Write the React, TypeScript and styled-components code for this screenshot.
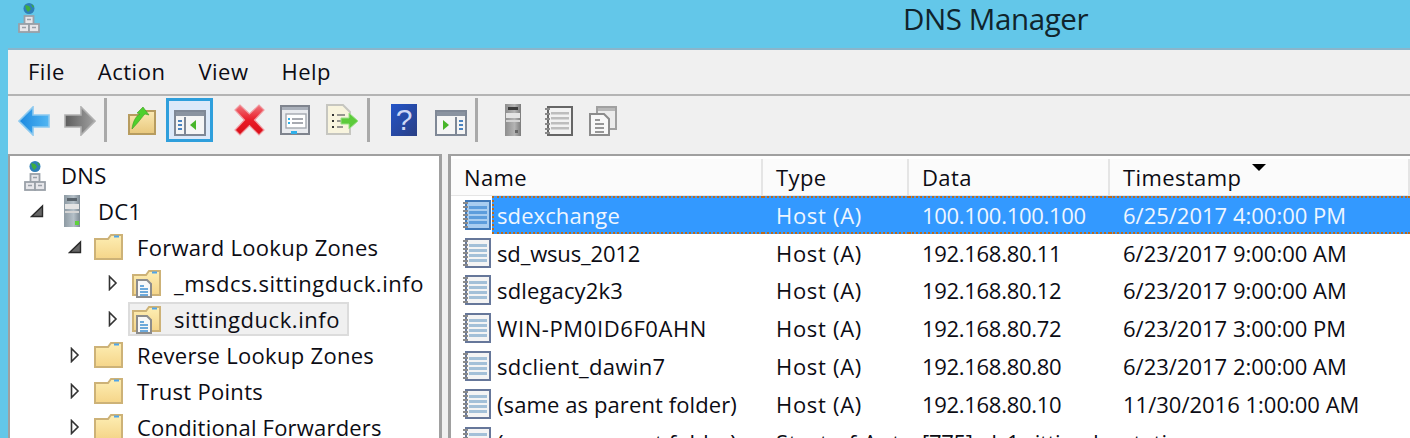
import React from 'react';
import styled, { createGlobalStyle } from 'styled-components';

const Global = createGlobalStyle`
  html, body {
    margin: 0;
    padding: 0;
    height: 438px;
    overflow: hidden;
    background: #63c7e9;
  }
`;

const Screen = styled.div`
  width: 1410px;
  height: 438px;
  overflow: hidden;
  display: flex;
  flex-direction: column;
  background: #63c7e9;
  font-family: 'Open Sans', 'Noto Sans', sans-serif;
  font-size: 22px;
  color: #0c0c14;
`;

const TitleBar = styled.header`
  height: 48px;
  flex: none;
  display: flex;
  align-items: flex-start;
  padding: 2px 0 0 18px;
  box-sizing: border-box;
`;

const Title = styled.div`
  margin-left: 863px;
  font-size: 29.5px;
  line-height: 34px;
  letter-spacing: -0.4px;
  white-space: nowrap;
  color: #10242c;
`;

const Window = styled.div`
  flex: 1;
  margin-left: 8px;
  min-height: 0;
  display: flex;
  flex-direction: column;
  background: #f0f0f0;
  border-top: 2px solid #8ab5cb;
`;

const MenuBar = styled.nav`
  height: 44px;
  flex: none;
  display: flex;
  align-items: flex-start;
  padding-left: 20px;
  gap: 33px;
  border-bottom: 2px solid #b4b4b4;
  letter-spacing: 0.5px;
`;

const MenuItem = styled.span`
  line-height: 42px;
`;

const ToolBar = styled.div`
  height: 58px;
  flex: none;
  display: flex;
  align-items: flex-start;
  padding: 2px 0 0 10px;
  box-sizing: border-box;
`;

const Tool = styled.span<{ $before?: number; $top?: number }>`
  display: block;
  flex: none;
  margin-left: ${(p) => p.$before ?? 0}px;
  margin-top: ${(p) => p.$top ?? 8}px;
  line-height: 0;
`;

const ToolSeparator = styled.span<{ $before: number }>`
  display: block;
  flex: none;
  width: 3px;
  height: 44px;
  margin-left: ${(p) => p.$before}px;
  background: #a9a9a9;
`;

const ActiveTool = styled.span`
  flex: none;
  display: flex;
  align-items: center;
  justify-content: center;
  width: 47px;
  height: 44px;
  margin-left: 10px;
  box-sizing: border-box;
  border: 3px solid #2f9fdc;
  background: #dce9f9;
  padding-top: 5px;
  line-height: 0;
`;

const Panes = styled.div`
  flex: 1;
  min-height: 0;
  display: flex;
  gap: 6px;
`;

const TreePane = styled.aside`
  width: 434px;
  flex: none;
  box-sizing: border-box;
  background: #fff;
  border: 2px solid #a0a0a0;
  border-width: 2px 3px 0 2px;
  padding-top: 1px;
`;

const TreeRow = styled.div<{ $indent: number }>`
  height: 36px;
  display: flex;
  align-items: center;
  padding-left: ${(p) => p.$indent}px;
  white-space: nowrap;
`;

const Twisty = styled.span<{ $w: number }>`
  width: ${(p) => p.$w}px;
  flex: none;
  display: flex;
  line-height: 0;
`;

const TreeIcon = styled.span<{ $w: number }>`
  width: ${(p) => p.$w}px;
  flex: none;
  display: flex;
  line-height: 0;
`;

const TreeLabel = styled.span<{ $spacing?: number }>`
  display: block;
  line-height: 32px;
  letter-spacing: ${(p) => p.$spacing ?? 0.3}px;
`;

const SelectedGroup = styled.span`
  display: flex;
  align-items: center;
  height: 34px;
  box-sizing: border-box;
  margin-left: -4px;
  padding: 0 7px 0 2px;
  background: #f0f0f0;
  border: 2px solid #dcdcdc;
`;

const ListPane = styled.main`
  flex: 1;
  min-width: 0;
  box-sizing: border-box;
  background: #fff;
  border-top: 2px solid #a0a0a0;
  border-left: 3px solid #a0a0a0;
  padding-top: 3px;
  overflow: hidden;
`;

const columns = '312px 146px 201px 1fr';

const HeaderRow = styled.div`
  display: grid;
  grid-template-columns: ${columns};
  height: 37px;
  box-sizing: border-box;
  border-bottom: 2px solid #e5e5e5;
  letter-spacing: 0.4px;
`;

const HeaderCell = styled.div`
  position: relative;
  padding-left: 13px;
  line-height: 36px;
  background: #fbfbfb;
  border-right: 2px solid #e5e5e5;
`;

const SortArrow = styled.span`
  position: absolute;
  top: 5px;
  left: 142px;
  width: 0;
  height: 0;
  border-left: 7px solid transparent;
  border-right: 7px solid transparent;
  border-top: 7px solid #000;
`;

const Row = styled.div`
  height: 37.8px;
  display: grid;
  grid-template-columns: ${columns};
  align-items: stretch;
`;

const NameCell = styled.div`
  display: flex;
  align-items: center;
  padding-left: 12px;
  white-space: nowrap;
`;

const RowIcon = styled.span`
  width: 29px;
  flex: none;
  display: flex;
  line-height: 0;
`;

const NameText = styled.span<{ $selected?: boolean; $spacing: number }>`
  flex: 1;
  align-self: stretch;
  display: flex;
  align-items: center;
  padding-left: 5px;
  letter-spacing: ${(p) => p.$spacing}px;
  ${(p) =>
    p.$selected
      ? `background: #3399ff; color: #eef6ff; border: dotted #b86a1e; border-width: 2px 0 2px 2px; padding-left: 3px;`
      : ''}
`;

const Cell = styled.div<{ $selected?: boolean; $spacing: number }>`
  display: flex;
  align-items: center;
  padding-left: 13px;
  white-space: nowrap;
  overflow: hidden;
  letter-spacing: ${(p) => p.$spacing}px;
  ${(p) =>
    p.$selected
      ? `background: #3399ff; color: #eef6ff; border: dotted #b86a1e; border-width: 2px 0;`
      : ''}
`;

function DnsIcon() {
  return (
    <svg width="22" height="31" viewBox="0 0 22 31">
      <circle cx="11" cy="6.5" r="5.5" fill="#2f7fb8" />
      <path d="M7 3l4 1 2 3-3 3-2-3zM13 2l3 2-1 2z" fill="#3fae3f" />
      <rect x="6.5" y="14" width="9" height="8" fill="#e6e6ea" stroke="#9aa0a8" strokeWidth="1.8" />
      <rect x="1" y="22" width="10" height="8" fill="#e6e6ea" stroke="#9aa0a8" strokeWidth="1.8" />
      <rect x="11" y="22" width="10" height="8" fill="#e6e6ea" stroke="#9aa0a8" strokeWidth="1.8" />
      <path d="M9 17.5h4M4 25.5h4M14 25.5h4" stroke="#9aa0a8" strokeWidth="1.4" />
    </svg>
  );
}

function ServerIcon({ gray }: { gray?: boolean }) {
  const id = gray ? 'srvg' : 'srvc';
  return (
    <svg width="16" height="32" viewBox="0 0 16 32">
      <defs>
        <linearGradient id={id} x1="0" x2="1" y1="0" y2="0">
          <stop offset="0" stopColor={gray ? '#8e8e8e' : '#8d9aa3'} />
          <stop offset="0.6" stopColor={gray ? '#b4b4b4' : '#b5c0c8'} />
          <stop offset="1" stopColor={gray ? '#7c7c7c' : '#7d8a94'} />
        </linearGradient>
      </defs>
      <rect x="0" y="0" width="16" height="32" fill={`url(#${id})`} />
      <rect x="3" y="3" width="10" height="3" fill={gray ? '#3c3c3c' : '#5a646c'} />
      <rect x="1" y="9" width="14" height="5" fill="#e4e4e4" />
      <rect x="1" y="16" width="14" height="2" fill="#d4d4d4" />
      {gray ? (
        <rect x="10" y="26" width="3" height="3" fill="#666" />
      ) : (
        <rect x="11" y="26" width="4" height="4" fill="#5fd23c" />
      )}
    </svg>
  );
}

function Folder({ zone }: { zone?: boolean }) {
  return (
    <svg width="30" height="30" viewBox="0 0 30 30">
      <defs>
        <linearGradient id="fold" x1="0" x2="0" y1="0" y2="1">
          <stop offset="0" stopColor="#fdeeb4" />
          <stop offset="1" stopColor="#f5d589" />
        </linearGradient>
      </defs>
      <path d="M1 27V7h13l3-4h11v24z" fill="url(#fold)" stroke="#cdb277" strokeWidth="2" />
      <path d="M20 4.5h5" stroke="#4fa5e8" strokeWidth="2" />
      {zone && (
        <g>
          <path d="M5 12h10l4 4v13H5z" fill="#f8f8f8" stroke="#8c8c8c" strokeWidth="2" />
          <path d="M8 18h4M8 21h8M8 24h8M8 27h8" stroke="#3f8fcf" strokeWidth="1.6" />
        </g>
      )}
    </svg>
  );
}

function Open() {
  return (
    <svg width="14" height="14" viewBox="0 0 14 14">
      <path d="M1.5 12.5L12.5 2v10.5z" fill="#666" stroke="#2a2a2a" strokeWidth="1.4" />
    </svg>
  );
}

function Closed() {
  return (
    <svg width="10" height="16" viewBox="0 0 10 16">
      <path d="M1.5 1.5L8 8l-6.5 6.5z" fill="#fff" stroke="#333" strokeWidth="1.6" />
    </svg>
  );
}

function RecordIcon({ selected }: { selected?: boolean }) {
  const lines = [6, 11, 16, 21];
  return (
    <svg width="28" height="30" viewBox="0 0 28 30">
      <rect
        x="3"
        y="1"
        width="24"
        height="28"
        fill={selected ? '#a9cdf0' : '#f4f4f4'}
        stroke={selected ? '#3f78b8' : '#66779a'}
        strokeWidth="2"
      />
      {lines.map((y) => (
        <rect key={y} x="6" y={y} width="18" height="3" fill={selected ? '#5d9ddc' : '#a3c0d8'} />
      ))}
      {[3, 7, 11, 15, 19, 23, 27].map((y) => (
        <rect key={y} x="0" y={y - 1} width="5" height="2" fill="#8a8a8a" />
      ))}
    </svg>
  );
}

function ArrowBack() {
  return (
    <svg width="32" height="30" viewBox="0 0 32 30">
      <defs>
        <linearGradient id="ab" x1="0" x2="1" y1="0" y2="0">
          <stop offset="0" stopColor="#1b88e0" />
          <stop offset="1" stopColor="#52b6f2" />
        </linearGradient>
      </defs>
      <path d="M1 15L15 1v8h16v12H15v8z" fill="url(#ab)" stroke="#8cc9ef" strokeWidth="1.6" />
    </svg>
  );
}

function ArrowForward() {
  return (
    <svg width="32" height="30" viewBox="0 0 32 30">
      <defs>
        <linearGradient id="af" x1="0" x2="1" y1="0" y2="0">
          <stop offset="0" stopColor="#5c5c5c" />
          <stop offset="1" stopColor="#a2a2a2" />
        </linearGradient>
      </defs>
      <path d="M31 15L17 1v8H1v12h16v8z" fill="url(#af)" stroke="#b0b0b0" strokeWidth="1.6" />
    </svg>
  );
}

function UpFolder() {
  return (
    <svg width="28" height="30" viewBox="0 0 28 30">
      <defs>
        <linearGradient id="upf" x1="0" x2="0" y1="0" y2="1">
          <stop offset="0" stopColor="#fbeab4" />
          <stop offset="1" stopColor="#e8c77c" />
        </linearGradient>
      </defs>
      <path d="M1 28V9h12l3-4h11v23z" fill="url(#upf)" stroke="#b79c5f" strokeWidth="2" />
      <path d="M4 23C5 15 8 10 12 8L9 7l6-6 6 8-4-1c-3 3-7 9-13 15z" fill="#4fd02c" stroke="#3c9a22" strokeWidth="0.6" />
    </svg>
  );
}

function PaneIcon({ right }: { right?: boolean }) {
  return (
    <svg width="32" height="26" viewBox="0 0 32 26">
      <rect x="1" y="1" width="30" height="24" fill="#f5f5f5" stroke="#7f8896" strokeWidth="2" />
      <rect x="2" y="2" width="28" height="4" fill="#8a93a0" />
      <path d={right ? 'M21 7v18' : 'M11 7v18'} stroke="#7f8896" strokeWidth="2" />
      {right ? (
        <g>
          <path d="M8 10l6 5-6 5z" fill="#47b52a" />
          <path d="M24 11h4M24 15h4M24 19h4" stroke="#4a83c0" strokeWidth="2" />
        </g>
      ) : (
        <g>
          <path d="M22 10l-6 5 6 5z" fill="#47b52a" />
          <path d="M4 11h4M4 15h4M4 19h4" stroke="#4a83c0" strokeWidth="2" />
        </g>
      )}
    </svg>
  );
}

function DeleteIcon() {
  return (
    <svg width="33" height="32" viewBox="0 0 33 32">
      <defs>
        <linearGradient id="del" x1="0" x2="0" y1="0" y2="1">
          <stop offset="0" stopColor="#f0757d" />
          <stop offset="0.5" stopColor="#ea1c28" />
          <stop offset="1" stopColor="#d80d18" />
        </linearGradient>
      </defs>
      <path
        d="M2 6l5-5 9.5 9L26 1l5 5-9.5 10L31 26l-5 5-9.5-9.5L7 31l-5-5 9.5-10z"
        fill="url(#del)"
        stroke="#f09aa0"
        strokeWidth="1.2"
      />
    </svg>
  );
}

function PropsIcon() {
  return (
    <svg width="30" height="30" viewBox="0 0 30 30">
      <rect x="1" y="1" width="28" height="28" fill="#e9ebef" stroke="#7f848e" strokeWidth="2" />
      <rect x="2" y="2" width="26" height="3" fill="#aab0ba" />
      <rect x="6" y="9" width="20" height="14" fill="#fff" stroke="#a3a8b0" strokeWidth="1.4" />
      <path d="M12 14h11M12 18h11" stroke="#8a8f98" strokeWidth="1.5" />
      <path d="M8 14h2M8 18h2" stroke="#2fb0ea" strokeWidth="1.8" />
      <rect x="11" y="26" width="6" height="3" fill="#2fb0ea" />
    </svg>
  );
}

function ExportIcon() {
  return (
    <svg width="33" height="32" viewBox="0 0 33 32">
      <path d="M1 1h16l7 7v22H1z" fill="#f8f4de" stroke="#c6c6c0" strokeWidth="2" />
      <path d="M6 11h2M6 17h2M6 23h2" stroke="#333" strokeWidth="2" />
      <path d="M11 11h8M11 17h6M11 23h6" stroke="#777" strokeWidth="1.6" />
      <path d="M15 14h8V9l9 8-9 8v-5h-8z" fill="#5ccb3b" stroke="#9adf87" strokeWidth="1" />
    </svg>
  );
}

function HelpIcon() {
  return (
    <svg width="26" height="32" viewBox="0 0 26 32">
      <defs>
        <linearGradient id="hlp" x1="0" x2="1" y1="0" y2="1">
          <stop offset="0" stopColor="#2354c8" />
          <stop offset="1" stopColor="#2a3f84" />
        </linearGradient>
      </defs>
      <rect width="26" height="32" fill="url(#hlp)" />
      <text
        x="13"
        y="26"
        textAnchor="middle"
        fontFamily="'Liberation Sans', sans-serif"
        fontSize="30"
        fill="#cfd8f6"
      >
        ?
      </text>
    </svg>
  );
}

function ListIcon() {
  return (
    <svg width="28" height="30" viewBox="0 0 28 30">
      <rect x="3" y="1" width="24" height="28" fill="#f2f2f2" stroke="#666" strokeWidth="2" />
      {[6, 11, 16, 21].map((y) => (
        <rect key={y} x="6" y={y} width="18" height="2.5" fill="#bdbdbd" />
      ))}
      {[3, 8, 13, 18, 23, 27].map((y) => (
        <rect key={y} x="0" y={y - 1} width="5" height="2" fill="#8a8a8a" />
      ))}
    </svg>
  );
}

function CopiesIcon() {
  return (
    <svg width="28" height="30" viewBox="0 0 28 30">
      <rect x="8" y="1" width="19" height="22" fill="#ececec" stroke="#a0a0a0" strokeWidth="2" />
      <rect x="9" y="2" width="17" height="3" fill="#b8b8b8" />
      <path d="M1 8h14l5 5v16H1z" fill="#f8f8f8" stroke="#8c8c8c" strokeWidth="2" />
      <path d="M6 14h5M6 18h9M6 22h9M6 26h9" stroke="#777" strokeWidth="1.5" />
    </svg>
  );
}

const records = [
  { name: 'sdexchange', spacing: 0.1, type: 'Host (A)', data: '100.100.100.100', time: '6/25/2017 4:00:00 PM', selected: true },
  { name: 'sd_wsus_2012', spacing: -0.15, type: 'Host (A)', data: '192.168.80.11', time: '6/23/2017 9:00:00 AM' },
  { name: 'sdlegacy2k3', spacing: 0.15, type: 'Host (A)', data: '192.168.80.12', time: '6/23/2017 9:00:00 AM' },
  { name: 'WIN-PM0ID6F0AHN', spacing: 0.6, type: 'Host (A)', data: '192.168.80.72', time: '6/23/2017 3:00:00 PM' },
  { name: 'sdclient_dawin7', spacing: 0.35, type: 'Host (A)', data: '192.168.80.80', time: '6/23/2017 2:00:00 AM' },
  { name: '(same as parent folder)', spacing: 0.1, type: 'Host (A)', data: '192.168.80.10', time: '11/30/2016 1:00:00 AM' },
  { name: '(same as parent folder)', spacing: 0.1, type: 'Start of Aut...', data: '[775], dc1.sittingduck.info.', time: 'static' },
];

function App() {
  return (
    <Screen>
      <Global />
      <TitleBar>
        <DnsIcon />
        <Title>DNS Manager</Title>
      </TitleBar>
      <Window>
        <MenuBar>
          <MenuItem>File</MenuItem>
          <MenuItem>Action</MenuItem>
          <MenuItem>View</MenuItem>
          <MenuItem>Help</MenuItem>
        </MenuBar>
        <ToolBar>
          <Tool><ArrowBack /></Tool>
          <Tool $before={14}><ArrowForward /></Tool>
          <ToolSeparator $before={8} />
          <Tool $before={21}><UpFolder /></Tool>
          <ActiveTool><PaneIcon /></ActiveTool>
          <Tool $before={20} $top={6}><DeleteIcon /></Tool>
          <Tool $before={14} $top={7}><PropsIcon /></Tool>
          <Tool $before={16} $top={6}><ExportIcon /></Tool>
          <ToolSeparator $before={8} />
          <Tool $before={21} $top={6}><HelpIcon /></Tool>
          <Tool $before={18} $top={12}><PaneIcon right /></Tool>
          <ToolSeparator $before={8} />
          <Tool $before={27} $top={6}><ServerIcon gray /></Tool>
          <Tool $before={24}><ListIcon /></Tool>
          <Tool $before={16}><CopiesIcon /></Tool>
        </ToolBar>
        <Panes>
          <TreePane>
            <TreeRow $indent={14}>
              <TreeIcon $w={37}><DnsIcon /></TreeIcon>
              <TreeLabel>DNS</TreeLabel>
            </TreeRow>
            <TreeRow $indent={20}>
              <Twisty $w={34}><Open /></Twisty>
              <TreeIcon $w={34}><ServerIcon /></TreeIcon>
              <TreeLabel>DC1</TreeLabel>
            </TreeRow>
            <TreeRow $indent={58}>
              <Twisty $w={26}><Open /></Twisty>
              <TreeIcon $w={43}><Folder /></TreeIcon>
              <TreeLabel>Forward Lookup Zones</TreeLabel>
            </TreeRow>
            <TreeRow $indent={98}>
              <Twisty $w={24}><Closed /></Twisty>
              <TreeIcon $w={42}><Folder zone /></TreeIcon>
              <TreeLabel $spacing={0.52}>_msdcs.sittingduck.info</TreeLabel>
            </TreeRow>
            <TreeRow $indent={98}>
              <Twisty $w={24}><Closed /></Twisty>
              <SelectedGroup>
                <TreeIcon $w={42}><Folder zone /></TreeIcon>
                <TreeLabel $spacing={0.55}>sittingduck.info</TreeLabel>
              </SelectedGroup>
            </TreeRow>
            <TreeRow $indent={60}>
              <Twisty $w={24}><Closed /></Twisty>
              <TreeIcon $w={43}><Folder /></TreeIcon>
              <TreeLabel>Reverse Lookup Zones</TreeLabel>
            </TreeRow>
            <TreeRow $indent={60}>
              <Twisty $w={24}><Closed /></Twisty>
              <TreeIcon $w={43}><Folder /></TreeIcon>
              <TreeLabel>Trust Points</TreeLabel>
            </TreeRow>
            <TreeRow $indent={60}>
              <Twisty $w={24}><Closed /></Twisty>
              <TreeIcon $w={43}><Folder /></TreeIcon>
              <TreeLabel $spacing={0.2}>Conditional Forwarders</TreeLabel>
            </TreeRow>
          </TreePane>
          <ListPane>
            <HeaderRow>
              <HeaderCell>Name</HeaderCell>
              <HeaderCell>Type</HeaderCell>
              <HeaderCell>Data</HeaderCell>
              <HeaderCell>
                Timestamp
                <SortArrow />
              </HeaderCell>
            </HeaderRow>
            {records.map((r, i) => (
              <Row key={i}>
                <NameCell>
                  <RowIcon><RecordIcon selected={r.selected} /></RowIcon>
                  <NameText $selected={r.selected} $spacing={r.spacing}>{r.name}</NameText>
                </NameCell>
                <Cell $selected={r.selected} $spacing={0.7}>{r.type}</Cell>
                <Cell $selected={r.selected} $spacing={-0.3}>{r.data}</Cell>
                <Cell $selected={r.selected} $spacing={0}>{r.time}</Cell>
              </Row>
            ))}
          </ListPane>
        </Panes>
      </Window>
    </Screen>
  );
}

export default App;
